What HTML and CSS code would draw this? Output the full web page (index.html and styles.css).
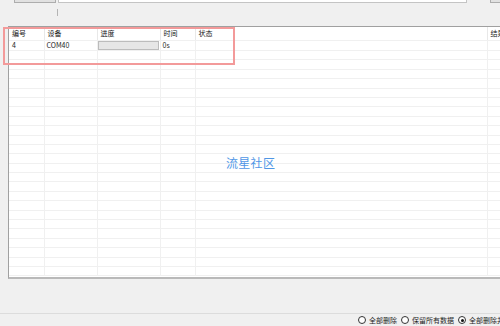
FILE: index.html
```html
<!DOCTYPE html>
<html lang="zh-CN">
<head>
    <meta charset="UTF-8">
    <meta name="viewport" content="width=device-width, initial-scale=1.0">
    <title>流星社区</title>
    <link rel="stylesheet" href="styles.css">
</head>
<body>

    <div class="window">
        <div class="toolbar">
            <div class="tool-btn"></div>
            <div class="path-box"></div>
            <div class="tool-btn small"></div>
        </div>
        <div class="tick"></div>

        <div class="list-panel">
            <table class="grid">
                <colgroup>
                    <col class="c-id">
                    <col class="c-dev">
                    <col class="c-prog">
                    <col class="c-time">
                    <col class="c-state">
                    <col class="c-result">
                </colgroup>
                <thead>
                    <tr>
                        <th>编号</th>
                        <th>设备</th>
                        <th>进度</th>
                        <th>时间</th>
                        <th>状态</th>
                        <th>结果</th>
                    </tr>
                </thead>
                <tbody id="rows">
                    <tr>
                        <td>4</td>
                        <td>COM40</td>
                        <td class="prog-cell"><div class="progress"></div></td>
                        <td>0s</td>
                        <td></td>
                        <td></td>
                    </tr>
                </tbody>
            </table>
            <div class="watermark">流星社区</div>
        </div>

        <div class="highlight"></div>

        <div class="status-bar">
            <span class="radio"></span><span class="label">全部删除</span>
            <span class="radio"></span><span class="label">保留所有数据</span>
            <span class="radio checked"></span><span class="label">全部删除并保留结果</span>
        </div>
    </div>

    <script>
        // fill the rest of the list with empty rows
        let body = document.getElementById('rows');
        for (let i = 0; i < 24; i++) {
            let tr = document.createElement('tr');
            for (let j = 0; j < 6; j++) {
                tr.appendChild(document.createElement('td'));
            }
            body.appendChild(tr);
        }
    </script>

</body>
</html>
```

FILE: styles.css
```css
body {
    margin: 0;
    background-color: #f0f0f0;
    font-family: "Noto Sans CJK SC", "DejaVu Sans", sans-serif;
    color: #1e1e1e;
    overflow: hidden;
}
.window {
    position: relative;
    width: 500px;
    height: 326px;
    overflow: hidden;
}
.toolbar {
    display: flex;
    align-items: flex-end;
    height: 3px;
    padding-left: 14px;
}
.tool-btn {
    width: 40px;
    height: 20px;
    background-color: #e1e1e1;
    border: 1px solid #adadad;
    flex-shrink: 0;
}
.tool-btn.small {
    width: 30px;
    margin-left: 23px;
}
.path-box {
    width: 407px;
    height: 20px;
    margin-left: 2px;
    background-color: #ffffff;
    border: 1px solid #c4c4c4;
    flex-shrink: 0;
}
.tick {
    width: 1px;
    height: 7px;
    margin: 6px 0 0 57px;
    background-color: #b4b4b4;
}
.list-panel {
    position: relative;
    margin: 10px 0 0 8px;
    height: 250px;
    border-top: 1px solid #a0a0a0;
    border-left: 1px solid #a0a0a0;
    border-bottom: 2px solid #b9b9b9;
    background-color: #ffffff;
    overflow: hidden;
}
.grid {
    table-layout: fixed;
    width: 560px;
    border-collapse: collapse;
    font-size: 7px;
    line-height: 1;
}
.c-id { width: 35px; }
.c-dev { width: 53px; }
.c-prog { width: 63px; }
.c-time { width: 35px; }
.c-state { width: 292px; }
.c-result { width: 82px; }
.grid th {
    height: 13px;
    padding: 0 0 0 3px;
    text-align: left;
    font-weight: normal;
    color: #202020;
    background-color: #ffffff;
    border-right: 1px solid #e8e8e8;
    border-bottom: 1px solid #f0f0f0;
}
.grid td {
    height: 8.4px;
    padding: 0 0 0 2px;
    border-right: 1px solid #f0f0f0;
    border-bottom: 1px solid #f0f0f0;
    white-space: nowrap;
}
.grid td:first-child {
    padding-left: 3px;
}
.grid td.prog-cell {
    padding: 0 1px 0 0;
}
.progress {
    height: 7px;
    background-color: #e6e6e6;
    border: 1px solid #bcbcbc;
}
.watermark {
    position: absolute;
    left: 217px;
    top: 127px;
    font-size: 12px;
    color: #4f96e6;
    letter-spacing: 0.3px;
}
.highlight {
    position: absolute;
    left: 3px;
    top: 27px;
    width: 228px;
    height: 34px;
    border: 2px solid #f39a9a;
}
.status-bar {
    position: absolute;
    left: 0;
    right: 0;
    bottom: 0;
    height: 12px;
    border-top: 1px solid #dcdcdc;
    display: flex;
    align-items: center;
    padding-left: 358px;
    font-size: 7px;
    white-space: nowrap;
}
.radio {
    box-sizing: border-box;
    position: relative;
    width: 8px;
    height: 8px;
    border: 1px solid #333333;
    border-radius: 50%;
    background-color: #ffffff;
    margin-right: 3px;
    flex-shrink: 0;
}
.radio.checked::after {
    content: "";
    position: absolute;
    left: 1.5px;
    top: 1.5px;
    width: 3px;
    height: 3px;
    border-radius: 50%;
    background-color: #111111;
}
.label {
    margin-right: 4px;
    flex-shrink: 0;
}
```
